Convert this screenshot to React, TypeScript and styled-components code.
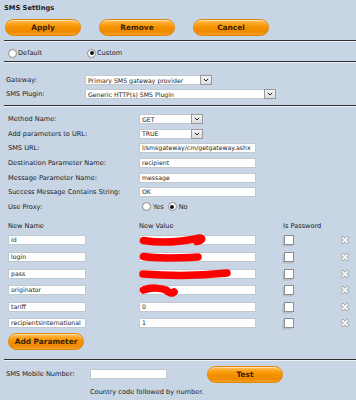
import React from 'react';
import styled, { createGlobalStyle } from 'styled-components';

const GlobalStyle = createGlobalStyle`
  html, body {
    margin: 0;
    padding: 0;
    background: #c8d5e5;
  }
  body {
    font-family: "DejaVu Sans", Verdana, sans-serif;
    font-size: 6.6px;
    color: #1a1a1a;
  }
`;

const params = [
  { name: 'id', value: '', scribble: 'M4.5 7.5 C20 10, 40 9, 56 6 C63 3.5, 66 6.5, 58 8.5' },
  { name: 'login', value: '', scribble: 'M4.5 6.5 C20 9, 40 8, 59 7' },
  { name: 'pass', value: '', scribble: 'M4 7 C30 9, 60 9, 88 6' },
  { name: 'originator', value: '', scribble: 'M4.5 7 C12 4, 22 5, 27 7 C30 10, 33 11, 35 9' },
  { name: 'tariff', value: '0' },
  { name: 'recipientsinternational', value: '1' },
];

const App = () => {
  return (
    <Page>
      <GlobalStyle />
      <Title>SMS Settings</Title>
      <ButtonRow>
        <OrangeButton>Apply</OrangeButton>
        <OrangeButton>Remove</OrangeButton>
        <OrangeButton>Cancel</OrangeButton>
      </ButtonRow>
      <Divider $gap={4} />

      <RadioRow>
        <RadioOption $w={79}>
          <Radio $checked={false} /> Default
        </RadioOption>
        <RadioOption $w={80}>
          <Radio $checked={true} /> Custom
        </RadioOption>
      </RadioRow>
      <Divider />

      <GatewaySection>
        <FieldRow $h={14}>
          <Label $w={79}>Gateway:</Label>
          <Select $w={127}>Primary SMS gateway provider</Select>
        </FieldRow>
        <FieldRow $h={14}>
          <Label $w={79}>SMS Plugin:</Label>
          <Select $w={191}>Generic HTTP(s) SMS Plugin</Select>
        </FieldRow>
      </GatewaySection>
      <Divider />

      <MethodSection>
        <FieldRow $h={14.6}>
          <Label $w={131}>Method Name:</Label>
          <Select $w={64}>GET</Select>
        </FieldRow>
        <FieldRow $h={14.6}>
          <Label $w={131}>Add parameters to URL:</Label>
          <Select $w={64}>TRUE</Select>
        </FieldRow>
        <FieldRow $h={14.6}>
          <Label $w={131}>SMS URL:</Label>
          <TextInput $w={117}>l/smsgateway/cm/getgateway.ashx</TextInput>
        </FieldRow>
        <FieldRow $h={14.6}>
          <Label $w={131}>Destination Parameter Name:</Label>
          <TextInput $w={117}>recipient</TextInput>
        </FieldRow>
        <FieldRow $h={14.6}>
          <Label $w={131}>Message Parameter Name:</Label>
          <TextInput $w={117}>message</TextInput>
        </FieldRow>
        <FieldRow $h={14.6}>
          <Label $w={131}>Success Message Contains String:</Label>
          <TextInput $w={117}>OK</TextInput>
        </FieldRow>
        <FieldRow $h={14.6}>
          <Label $w={134}>Use Proxy:</Label>
          <Radio $checked={false} />
          <ProxyText>Yes</ProxyText>
          <Radio $checked={true} />
          <ProxyText>No</ProxyText>
        </FieldRow>

        <ParamHeader>
          <span>New Name</span>
          <span>New Value</span>
          <span>Is Password</span>
          <span />
        </ParamHeader>
        {params.map((p) => (
          <ParamRow key={p.name}>
            <TextInput $w={78}>{p.name}</TextInput>
            <ValueCell>
              <TextInput $w={117}>{p.value}</TextInput>
              {p.scribble && (
                <Scribble width="100" height="14" viewBox="0 0 100 14">
                  <path d={p.scribble} stroke="#ff0000" strokeWidth="7.5" strokeLinecap="round" fill="none" />
                </Scribble>
              )}
            </ValueCell>
            <Checkbox />
            <DeleteIcon width="10" height="10" viewBox="0 0 10 10">
              <polygon
                points="1,2.8 2.8,1 5,3.2 7.2,1 9,2.8 6.8,5 9,7.2 7.2,9 5,6.8 2.8,9 1,7.2 3.2,5"
                fill="#f6f6f6"
                stroke="#9a9a9a"
                strokeWidth="0.9"
                strokeLinejoin="round"
              />
            </DeleteIcon>
          </ParamRow>
        ))}
        <AddButtonRow>
          <OrangeButton>Add Parameter</OrangeButton>
        </AddButtonRow>
      </MethodSection>
      <Divider $gap={9} />

      <MobileRow>
        <Label $w={84}>SMS Mobile Number:</Label>
        <TextInput $w={77} />
        <TestButton>Test</TestButton>
      </MobileRow>
      <Hint>Country code followed by number.</Hint>
    </Page>
  );
};

const Page = styled.div`
  padding: 3px 0 0 4px;
`;

const Title = styled.div`
  font-weight: bold;
  font-size: 6.7px;
  line-height: 10px;
  height: 10px;
`;

const ButtonRow = styled.div`
  display: flex;
  gap: 18px;
  margin-top: 6px;
  padding-left: 1px;
`;

const OrangeButton = styled.button`
  width: 76px;
  height: 17px;
  padding: 0;
  border: 1px solid #e08600;
  border-radius: 9px;
  background: linear-gradient(
    to bottom,
    #ffc978 0%,
    #ffa51f 22%,
    #f39200 50%,
    #ef8a00 80%,
    #f5a02a 100%
  );
  box-shadow: inset 0 1px 0 rgba(255, 255, 255, 0.45);
  font-family: "DejaVu Sans", Verdana, sans-serif;
  font-weight: bold;
  font-size: 7.4px;
  color: #3a2200;
  cursor: pointer;
`;

const TestButton = styled(OrangeButton)`
  margin-left: 40px;
`;

const Divider = styled.div<{ $gap?: number }>`
  margin-top: ${({ $gap }) => $gap ?? 0}px;
  height: 1px;
  background: #2e2e2e;
  border-bottom: 1px solid #eef2f7;
`;

const RadioRow = styled.div`
  display: flex;
  align-items: center;
  height: 16px;
  padding: 3px 0 0 4px;
`;

const RadioOption = styled.label<{ $w: number }>`
  display: flex;
  align-items: center;
  gap: 1px;
  width: ${({ $w }) => $w}px;
`;

const Radio = styled.span<{ $checked: boolean }>`
  position: relative;
  display: inline-block;
  box-sizing: border-box;
  width: 9px;
  height: 9px;
  border-radius: 50%;
  border: 1px solid #8a8a8a;
  background: #fff;
  flex-shrink: 0;

  &::after {
    content: '';
    display: ${({ $checked }) => ($checked ? 'block' : 'none')};
    position: absolute;
    left: 1.5px;
    top: 1.5px;
    width: 4px;
    height: 4px;
    border-radius: 50%;
    background: #111;
  }
`;

const ProxyText = styled.span`
  margin: 0 4px 0 2px;
`;

const GatewaySection = styled.div`
  padding: 10px 0 4px 2px;
`;

const MethodSection = styled.div`
  padding: 5px 0 0 4px;
`;

const FieldRow = styled.div<{ $h: number }>`
  display: flex;
  align-items: center;
  height: ${({ $h }) => $h}px;
`;

const Label = styled.span<{ $w: number }>`
  width: ${({ $w }) => $w}px;
  flex-shrink: 0;
  white-space: nowrap;
`;

const InputBox = styled.div<{ $w: number }>`
  box-sizing: border-box;
  width: ${({ $w }) => $w}px;
  height: 10px;
  background: #fff;
  border: 1px solid #c2c8d0;
  font-size: 6.2px;
  line-height: 8px;
  padding: 0 2px;
  white-space: nowrap;
  overflow: hidden;
`;

const TextInput = ({ $w, children }: { $w: number; children?: React.ReactNode }) => (
  <InputBox $w={$w}>{children}</InputBox>
);

const SelectBox = styled.div<{ $w: number }>`
  box-sizing: border-box;
  display: flex;
  align-items: center;
  width: ${({ $w }) => $w}px;
  height: 10px;
  background: #fff;
  border: 1px solid #c2c8d0;
  font-size: 6.2px;
  padding-left: 2px;
  white-space: nowrap;
`;

const SelectText = styled.span`
  flex: 1;
  overflow: hidden;
`;

const SelectArrow = styled.span`
  box-sizing: border-box;
  display: flex;
  align-items: center;
  justify-content: center;
  width: 12px;
  height: 10px;
  margin-right: -1px;
  border: 1px solid #9a9a9a;
  background: linear-gradient(#f4f4f4, #dcdcdc);
`;

const Select = ({ $w, children }: { $w: number; children: React.ReactNode }) => (
  <SelectBox $w={$w}>
    <SelectText>{children}</SelectText>
    <SelectArrow>
      <svg width="6" height="4" viewBox="0 0 6 4">
        <path d="M0.8 0.8 L3 3 L5.2 0.8" stroke="#222" strokeWidth="1" fill="none" />
      </svg>
    </SelectArrow>
  </SelectBox>
);

const ParamHeader = styled.div`
  display: grid;
  grid-template-columns: 131px 144px 57px auto;
  align-items: center;
  height: 12px;
  margin-top: 6px;
`;

const ParamRow = styled.div`
  display: grid;
  grid-template-columns: 131px 144px 57px auto;
  align-items: center;
  height: 16.6px;
`;

const ValueCell = styled.div`
  position: relative;
  width: 117px;
`;

const Scribble = styled.svg`
  position: absolute;
  left: 0;
  top: -2px;
  overflow: visible;
`;

const Checkbox = styled.span`
  display: block;
  box-sizing: border-box;
  width: 10px;
  height: 10px;
  margin-left: 1px;
  background: #fff;
  border: 1px solid #8e8e8e;
  box-shadow: -1.5px 1.5px 0 #b4bccb;
`;

const DeleteIcon = styled.svg`
  display: block;
`;

const AddButtonRow = styled.div`
  display: flex;
  margin-top: 1px;
`;

const MobileRow = styled.div`
  display: flex;
  align-items: center;
  height: 17px;
  margin-top: 5px;
  padding-left: 2px;
`;

const Hint = styled.div`
  margin: 3px 0 0 86px;
  line-height: 12px;
`;

export default App;
